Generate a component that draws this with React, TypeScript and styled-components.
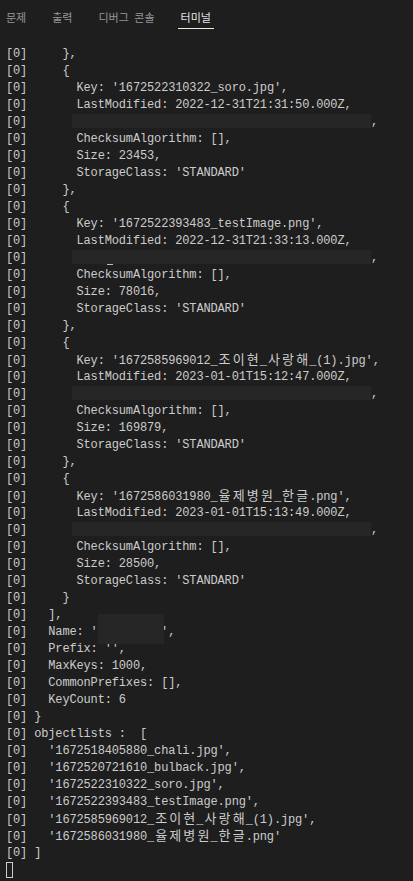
import React from "react";
import styled, { createGlobalStyle } from "styled-components";

const Global = createGlobalStyle`
  html, body {
    margin: 0;
    padding: 0;
    background: #1e1e1e;
    overflow: hidden;
  }
`;

const Page = styled.div`
  width: 413px;
  height: 881px;
  background: #1e1e1e;
  display: flex;
  flex-direction: column;
  overflow: hidden;
`;

const TabBar = styled.div`
  height: 35px;
  display: flex;
  align-items: flex-start;
  gap: 20px;
  padding-left: 3px;
  box-sizing: border-box;
`;

const Tab = styled.div<{ $active?: boolean }>`
  font-family: "Noto Sans CJK KR", "Noto Sans", sans-serif;
  font-size: 11px;
  line-height: 15px;
  word-spacing: 3px;
  padding: 10px 3px 3px;
  color: ${(p) => (p.$active ? "#e7e7e7" : "#969696")};
  border-bottom: 1px solid ${(p) => (p.$active ? "#e7e7e7" : "transparent")};
  white-space: pre;
`;

const Terminal = styled.div`
  padding: 11px 0 0 6px;
  font-family: "Liberation Mono", "Noto Sans CJK KR", monospace;
  font-size: 12px;
  letter-spacing: -0.15px;
  line-height: 17px;
  color: #cccccc;
`;

const Line = styled.div`
  height: 17px;
  white-space: pre;
`;

const Wide = styled.span`
  display: inline-block;
  width: 14.1px;
  text-align: center;
  vertical-align: baseline;
  font-family: "Noto Sans CJK KR", sans-serif;
  font-size: 13px;
  letter-spacing: 0;
  line-height: 13px;
`;

const Redact = styled.span<{ $leak?: boolean }>`
  display: inline-block;
  position: relative;
  vertical-align: top;
  width: 299px;
  height: 14px;
  margin-left: 2.5px;
  background: #262626;
  &::after {
    content: "";
    display: ${(p) => (p.$leak ? "block" : "none")};
    position: absolute;
    left: 35px;
    top: 14px;
    width: 6px;
    height: 1px;
    background: #bdbdbd;
  }
`;

const NameMask = styled.span`
  display: inline-block;
  position: relative;
  vertical-align: top;
  width: 63.45px;
  height: 17px;
  &::before {
    content: "";
    position: absolute;
    left: 0;
    top: -10px;
    width: 66px;
    height: 30px;
    background: #262626;
  }
`;

const Cursor = styled.span`
  display: inline-block;
  vertical-align: top;
  width: 7px;
  height: 16px;
  border: 1px solid #cccccc;
  box-sizing: border-box;
`;

const hangul = /[\uAC00-\uD7A3\u3131-\u318E]/;

function renderText(s: string): React.ReactNode[] {
  const out: React.ReactNode[] = [];
  let buf = "";
  Array.from(s).forEach((ch, i) => {
    if (hangul.test(ch)) {
      if (buf) {
        out.push(buf);
        buf = "";
      }
      out.push(<Wide key={i}>{ch}</Wide>);
    } else {
      buf += ch;
    }
  });
  if (buf) out.push(buf);
  return out;
}

type Obj = { key: string; mod: string; size: string; leak?: boolean };

const objects: Obj[] = [
  { key: "1672522310322_soro.jpg", mod: "2022-12-31T21:31:50.000Z", size: "23453" },
  { key: "1672522393483_testImage.png", mod: "2022-12-31T21:33:13.000Z", size: "78016", leak: true },
  { key: "1672585969012_조이현_사랑해_(1).jpg", mod: "2023-01-01T15:12:47.000Z", size: "169879" },
  { key: "1672586031980_율제병원_한글.png", mod: "2023-01-01T15:13:49.000Z", size: "28500" },
];

const listItems = [
  "1672518405880_chali.jpg",
  "1672520721610_bulback.jpg",
  "1672522310322_soro.jpg",
  "1672522393483_testImage.png",
  "1672585969012_조이현_사랑해_(1).jpg",
  "1672586031980_율제병원_한글.png",
];

type Row =
  | { kind: "text"; text: string }
  | { kind: "redact"; leak?: boolean }
  | { kind: "name" }
  | { kind: "cursor" };

function buildRows(): Row[] {
  const rows: Row[] = [];
  const t = (text: string) => rows.push({ kind: "text", text: "[0] " + text });
  t("    },");
  objects.forEach((o, i) => {
    t("    {");
    t(`      Key: '${o.key}',`);
    t(`      LastModified: ${o.mod},`);
    rows.push({ kind: "redact", leak: o.leak });
    t("      ChecksumAlgorithm: [],");
    t(`      Size: ${o.size},`);
    t("      StorageClass: 'STANDARD'");
    t(i === objects.length - 1 ? "    }" : "    },");
  });
  t("  ],");
  rows.push({ kind: "name" });
  t("  Prefix: '',");
  t("  MaxKeys: 1000,");
  t("  CommonPrefixes: [],");
  t("  KeyCount: 6");
  t("}");
  t("objectlists :  [");
  listItems.forEach((it, i) => t(`  '${it}'${i === listItems.length - 1 ? "" : ","}`));
  t("]");
  rows.push({ kind: "cursor" });
  return rows;
}

const tabs = ["문제", "출력", "디버그 콘솔", "터미널"];

export default function App() {
  const rows = buildRows();
  return (
    <Page>
      <Global />
      <TabBar>
        {tabs.map((tb, i) => (
          <Tab key={tb} $active={i === 3}>
            {tb}
          </Tab>
        ))}
      </TabBar>
      <Terminal>
        {rows.map((r, i) => {
          if (r.kind === "text") return <Line key={i}>{renderText(r.text)}</Line>;
          if (r.kind === "redact")
            return (
              <Line key={i}>
                {"[0]      "}
                <Redact $leak={r.leak} />
                {","}
              </Line>
            );
          if (r.kind === "name")
            return (
              <Line key={i}>
                {"[0]   Name: '"}
                <NameMask />
                {"',"}
              </Line>
            );
          return (
            <Line key={i}>
              <Cursor />
            </Line>
          );
        })}
      </Terminal>
    </Page>
  );
}
